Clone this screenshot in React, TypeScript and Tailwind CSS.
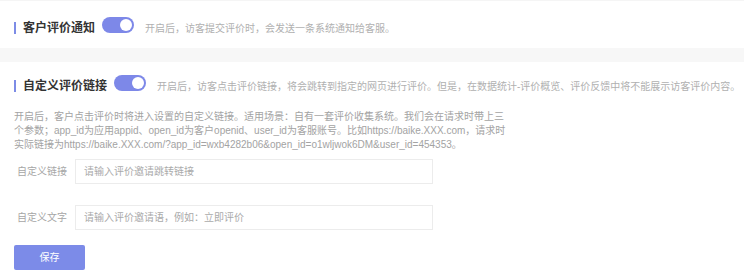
import { useState } from 'react'

const font = { fontFamily: '"Liberation Sans", "Noto Sans CJK SC", sans-serif' }

function Toggle({ on, onChange }: { on: boolean; onChange: () => void }) {
  return (
    <button
      type="button"
      onClick={onChange}
      className={`relative h-[16px] w-[32px] shrink-0 rounded-full transition-colors ${on ? 'bg-[#7d88e8]' : 'bg-[#dcdfe6]'}`}
    >
      <span
        className={`absolute top-[2px] h-[12px] w-[12px] rounded-full bg-white transition-all ${on ? 'left-[18px]' : 'left-[2px]'}`}
      />
    </button>
  )
}

function SectionTitle({ title }: { title: string }) {
  return (
    <div className="flex items-center">
      <span className="h-[12px] w-[2px] bg-[#7d8ce6]" />
      <span className="ml-[7px] text-[12px] font-bold leading-[16px] text-[#333]">{title}</span>
    </div>
  )
}

export default function App() {
  const [notify, setNotify] = useState(true)
  const [custom, setCustom] = useState(true)
  const [link, setLink] = useState('')
  const [text, setText] = useState('')

  return (
    <div className="h-[275px] w-[746px] overflow-hidden bg-white" style={font}>
      <div className="h-[1px] w-[744px] bg-[#f5f5f5]" />
      <div className="h-[47px] w-[744px] bg-white pl-[14px] pt-[15px]">
        <div className="flex items-center">
          <SectionTitle title="客户评价通知" />
          <div className="ml-[7px]">
            <Toggle on={notify} onChange={() => setNotify(!notify)} />
          </div>
          <span className="ml-[11px] text-[10px] text-[#b0b0b0]">
            开启后，访客提交评价时，会发送一条系统通知给客服。
          </span>
        </div>
      </div>
      <div className="h-[14px] w-[744px] bg-[#f7f7f7]" />
      <div className="w-[744px] bg-white pl-[14px] pt-[12px]">
        <div className="flex items-center">
          <SectionTitle title="自定义评价链接" />
          <div className="ml-[7px]">
            <Toggle on={custom} onChange={() => setCustom(!custom)} />
          </div>
          <span className="ml-[11px] whitespace-nowrap text-[10px] text-[#b0b0b0]">
            开启后，访客点击评价链接，将会跳转到指定的网页进行评价。但是，在数据统计-评价概览、评价反馈中将不能展示访客评价内容。
          </span>
        </div>

        <p className="mt-[12px] text-[10px] leading-[14px] text-[#a3a3a3]">
          开启后，客户点击评价时将进入设置的自定义链接。适用场景：自有一套评价收集系统。我们会在请求时带上三
          <br />
          个参数；app_id为应用appid、open_id为客户openid、user_id为客服账号。比如https://baike.XXX.com，请求时
          <br />
          实际链接为https://baike.XXX.com/?app_id=wxb4282b06&amp;open_id=o1wljwok6DM&amp;user_id=454353。
        </p>

        <div className="mt-[7px] flex items-center">
          <label className="w-[61px] pl-[3px] text-[10px] text-[#a6a6a6]">自定义链接</label>
          <input
            value={link}
            onChange={(e) => setLink(e.target.value)}
            placeholder="请输入评价邀请跳转链接"
            className="h-[25px] w-[358px] border border-[#ececec] px-[8px] text-[10px] text-[#333] outline-none placeholder:text-[#aaa]"
          />
        </div>

        <div className="mt-[21px] flex items-center">
          <label className="w-[61px] pl-[3px] text-[10px] text-[#a6a6a6]">自定义文字</label>
          <input
            value={text}
            onChange={(e) => setText(e.target.value)}
            placeholder="请输入评价邀请语，例如：立即评价"
            className="h-[25px] w-[358px] border border-[#ececec] px-[8px] text-[10px] text-[#333] outline-none placeholder:text-[#aaa]"
          />
        </div>

        <button
          type="button"
          className="mt-[15px] h-[25px] w-[71px] rounded-[2px] bg-[#7c8be8] text-[10px] text-white"
        >
          保存
        </button>
      </div>
    </div>
  )
}
